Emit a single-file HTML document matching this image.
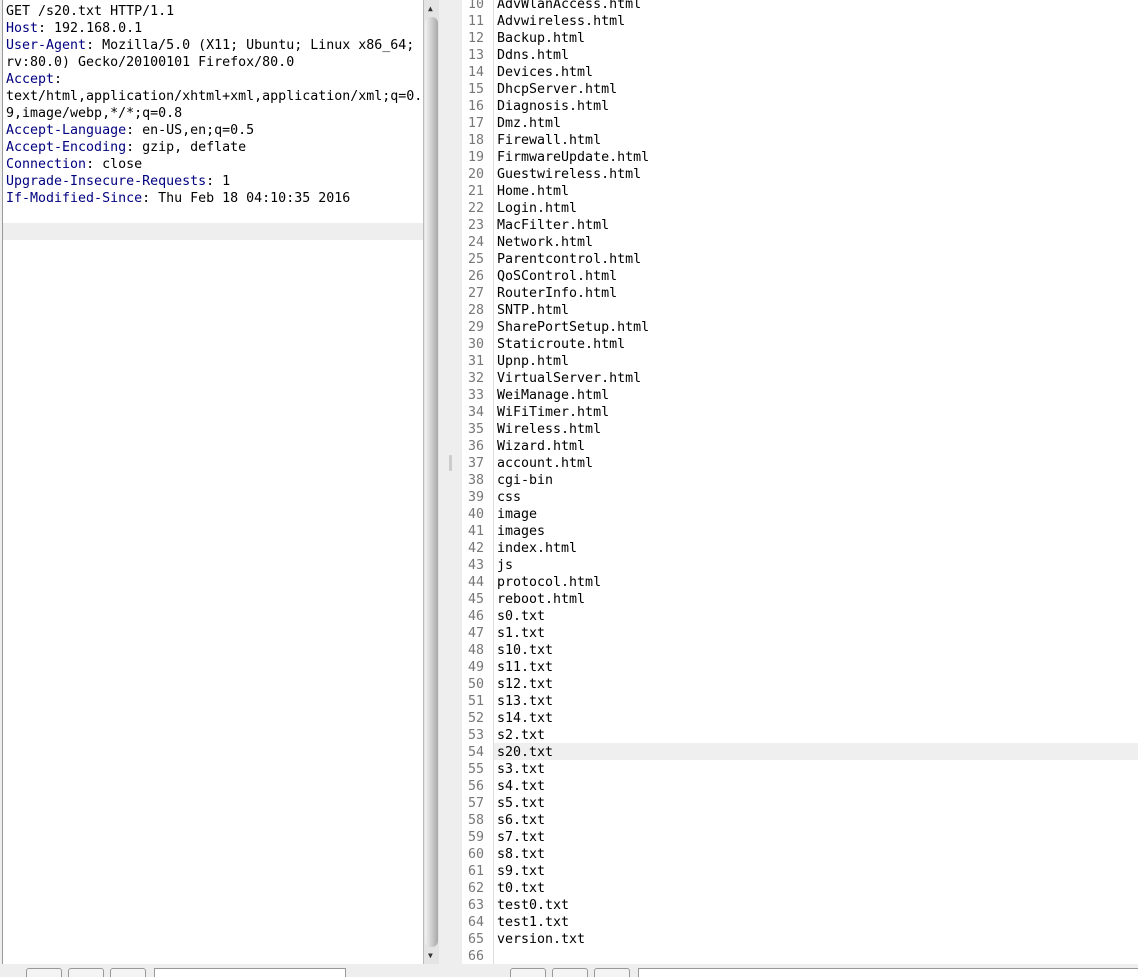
<!DOCTYPE html>
<html><head><style>
html,body{margin:0;padding:0;width:1138px;height:977px;overflow:hidden;background:#eeeeee;position:relative;font-family:"DejaVu Sans Mono","Liberation Mono",monospace;font-size:13.3px;}
.lp{position:absolute;left:2px;top:0;width:421px;height:964px;background:#fff;border-left:1px solid #999;}
.lp .l{position:absolute;left:3px;height:17px;line-height:17px;white-space:pre;color:#000;}
.k{color:#000080;}
.sb{position:absolute;left:423px;top:0;width:15px;height:964px;background:#e4e4e4;border-left:1px solid #bbb;}
.thumb{position:absolute;left:1px;top:17px;width:13px;height:930px;background:linear-gradient(90deg,#f2f2f2,#cfcfcf,#a8a8a8);border-radius:6px;}
.split{position:absolute;left:439px;top:0;width:16px;height:977px;background:#eee;}
.rp{position:absolute;left:462px;top:0;width:676px;height:964px;background:#fff;}
.rp .n{position:absolute;left:0;width:22px;text-align:right;color:#777;height:17px;line-height:17px;}
.rp .t{position:absolute;left:35px;white-space:pre;height:17px;line-height:17px;color:#000;}
.gut{position:absolute;left:31px;top:0;width:1px;height:964px;background:#ddd;}
.btn{position:absolute;top:968px;width:34px;height:14px;border:1px solid #999;border-radius:3px;background:#f4f4f4;}
.inp{position:absolute;top:968px;height:14px;border:1px solid #999;background:#fff;}
</style></head><body>
<div class="lp">
<div class="l" style="top:3px">GET /s20.txt HTTP/1.1</div>
<div class="l" style="top:20px"><span class="k">Host</span>: 192.168.0.1</div>
<div class="l" style="top:37px"><span class="k">User-Agent</span>: Mozilla/5.0 (X11; Ubuntu; Linux x86_64;</div>
<div class="l" style="top:54px">rv:80.0) Gecko/20100101 Firefox/80.0</div>
<div class="l" style="top:71px"><span class="k">Accept</span>:</div>
<div class="l" style="top:88px">text/html,application/xhtml+xml,application/xml;q=0.</div>
<div class="l" style="top:105px">9,image/webp,*/*;q=0.8</div>
<div class="l" style="top:122px"><span class="k">Accept-Language</span>: en-US,en;q=0.5</div>
<div class="l" style="top:139px"><span class="k">Accept-Encoding</span>: gzip, deflate</div>
<div class="l" style="top:156px"><span class="k">Connection</span>: close</div>
<div class="l" style="top:173px"><span class="k">Upgrade-Insecure-Requests</span>: 1</div>
<div class="l" style="top:190px"><span class="k">If-Modified-Since</span>: Thu Feb 18 04:10:35 2016</div>
<div style="position:absolute;left:0;top:223px;width:421px;height:17px;background:#eeeeee"></div>
</div>
<div class="sb"><div class="thumb"></div>
<div style="position:absolute;left:4px;top:4px;font-size:8px;color:#333">▲</div>
<div style="position:absolute;left:4px;top:951px;font-size:8px;color:#333">▼</div></div>
<div class="split"><div style="position:absolute;left:10px;top:455px;width:3px;height:16px;background:#ccc;border-radius:1px"></div></div>
<div class="rp" id="rp"><div class="gut"></div>
<div style="position:absolute;left:32px;top:743px;width:644px;height:17px;background:#efefef"></div>
</div>
<div class="btn" style="left:26px"></div><div class="btn" style="left:68px"></div><div class="btn" style="left:110px"></div>
<div class="inp" style="left:154px;width:190px"></div>
<div class="btn" style="left:510px"></div><div class="btn" style="left:552px"></div><div class="btn" style="left:594px"></div>
<div class="inp" style="left:638px;width:500px"></div>
<script>
var f=["AdvWlanAccess.html","Advwireless.html","Backup.html","Ddns.html","Devices.html","DhcpServer.html","Diagnosis.html","Dmz.html","Firewall.html","FirmwareUpdate.html","Guestwireless.html","Home.html","Login.html","MacFilter.html","Network.html","Parentcontrol.html","QoSControl.html","RouterInfo.html","SNTP.html","SharePortSetup.html","Staticroute.html","Upnp.html","VirtualServer.html","WeiManage.html","WiFiTimer.html","Wireless.html","Wizard.html","account.html","cgi-bin","css","image","images","index.html","js","protocol.html","reboot.html","s0.txt","s1.txt","s10.txt","s11.txt","s12.txt","s13.txt","s14.txt","s2.txt","s20.txt","s3.txt","s4.txt","s5.txt","s6.txt","s7.txt","s8.txt","s9.txt","t0.txt","test0.txt","test1.txt","version.txt",""];
var h="";for(var i=0;i<f.length;i++){var y=-4.5+i*17;h+='<div class="n" style="top:'+y+'px">'+(10+i)+'</div><div class="t" style="top:'+y+'px">'+f[i]+'</div>';}
document.getElementById("rp").insertAdjacentHTML("beforeend",h);
</script>
</body></html>
